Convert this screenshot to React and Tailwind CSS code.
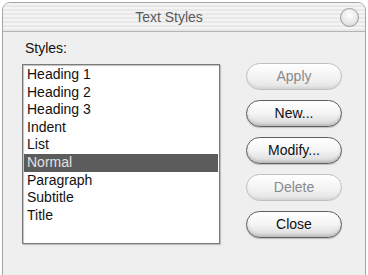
const styles = ["Heading 1", "Heading 2", "Heading 3", "Indent", "List", "Normal", "Paragraph", "Subtitle", "Title"];

const buttons = [
  { label: "Apply", disabled: true },
  { label: "New...", disabled: false },
  { label: "Modify...", disabled: false },
  { label: "Delete", disabled: true },
  { label: "Close", disabled: false },
];

function PillButton({ label, disabled }) {
  return (
    <button
      type="button"
      className={
        disabled
          ? "flex h-[27px] w-[96px] items-center justify-center rounded-full border border-[#c0c0c0] bg-[linear-gradient(#ffffff,#f3f3f3_55%,#e2e2e2)] text-[14px] text-[#8a8a8a] shadow-[inset_0_-2px_2px_rgba(0,0,0,0.06)]"
          : "flex h-[27px] w-[96px] items-center justify-center rounded-full border border-[#5e5e5e] bg-[linear-gradient(#ffffff,#f4f4f4_50%,#d8d8d8)] text-[14px] text-[#111] shadow-[inset_0_-2px_3px_rgba(0,0,0,0.15),0_1px_1px_rgba(0,0,0,0.2)]"
      }
    >
      {label}
    </button>
  );
}

export default function App() {
  return (
    <div className="h-[275px] w-[368px] overflow-hidden bg-white font-['Liberation_Sans',Arial,sans-serif]">
      <div className="ml-[2px] mt-[2px] h-[290px] w-[364px] overflow-hidden rounded-t-[8px] border border-[#a4a4a4] bg-[#efefef]">
        <div className="relative flex h-[29px] items-center justify-center border-b border-[#b4b4b4] bg-[repeating-linear-gradient(#f4f4f4_0px,#f4f4f4_2px,#e8e8e8_2px,#e8e8e8_4px)]">
          <span className="ml-[-30px] text-[14px] text-[#5a5a5a]">Text Styles</span>
          <span className="absolute right-[6px] top-[5px] h-[19px] w-[19px] rounded-full border border-[#9a9a9a] bg-[radial-gradient(circle_at_50%_35%,#ffffff,#e6e6e6_60%,#cfcfcf)]" />
        </div>
        <div className="flex">
          <div className="ml-[19px] flex flex-col">
            <div className="mt-[8px] pl-[3px] text-[14px] leading-[16px] text-[#111]">Styles:</div>
            <div className="mt-[8px] h-[180px] w-[198px] border border-[#7a7a7a] bg-white py-[1px] shadow-[inset_1px_1px_1px_rgba(0,0,0,0.25),1px_1px_1px_rgba(0,0,0,0.2)]">
              {styles.map((s) => (
                <div
                  key={s}
                  className={
                    s === "Normal"
                      ? "mx-[1px] h-[17.6px] bg-[#5c5c5c] pl-[3px] text-[14px] leading-[17.6px] text-[#e2e2e2]"
                      : "mx-[1px] h-[17.6px] pl-[3px] text-[14px] leading-[17.6px] text-[#111]"
                  }
                >
                  {s}
                </div>
              ))}
            </div>
          </div>
          <div className="ml-[26px] mt-[31px] flex flex-col gap-[10px]">
            {buttons.map((b) => (
              <PillButton key={b.label} {...b} />
            ))}
          </div>
        </div>
      </div>
    </div>
  );
}
